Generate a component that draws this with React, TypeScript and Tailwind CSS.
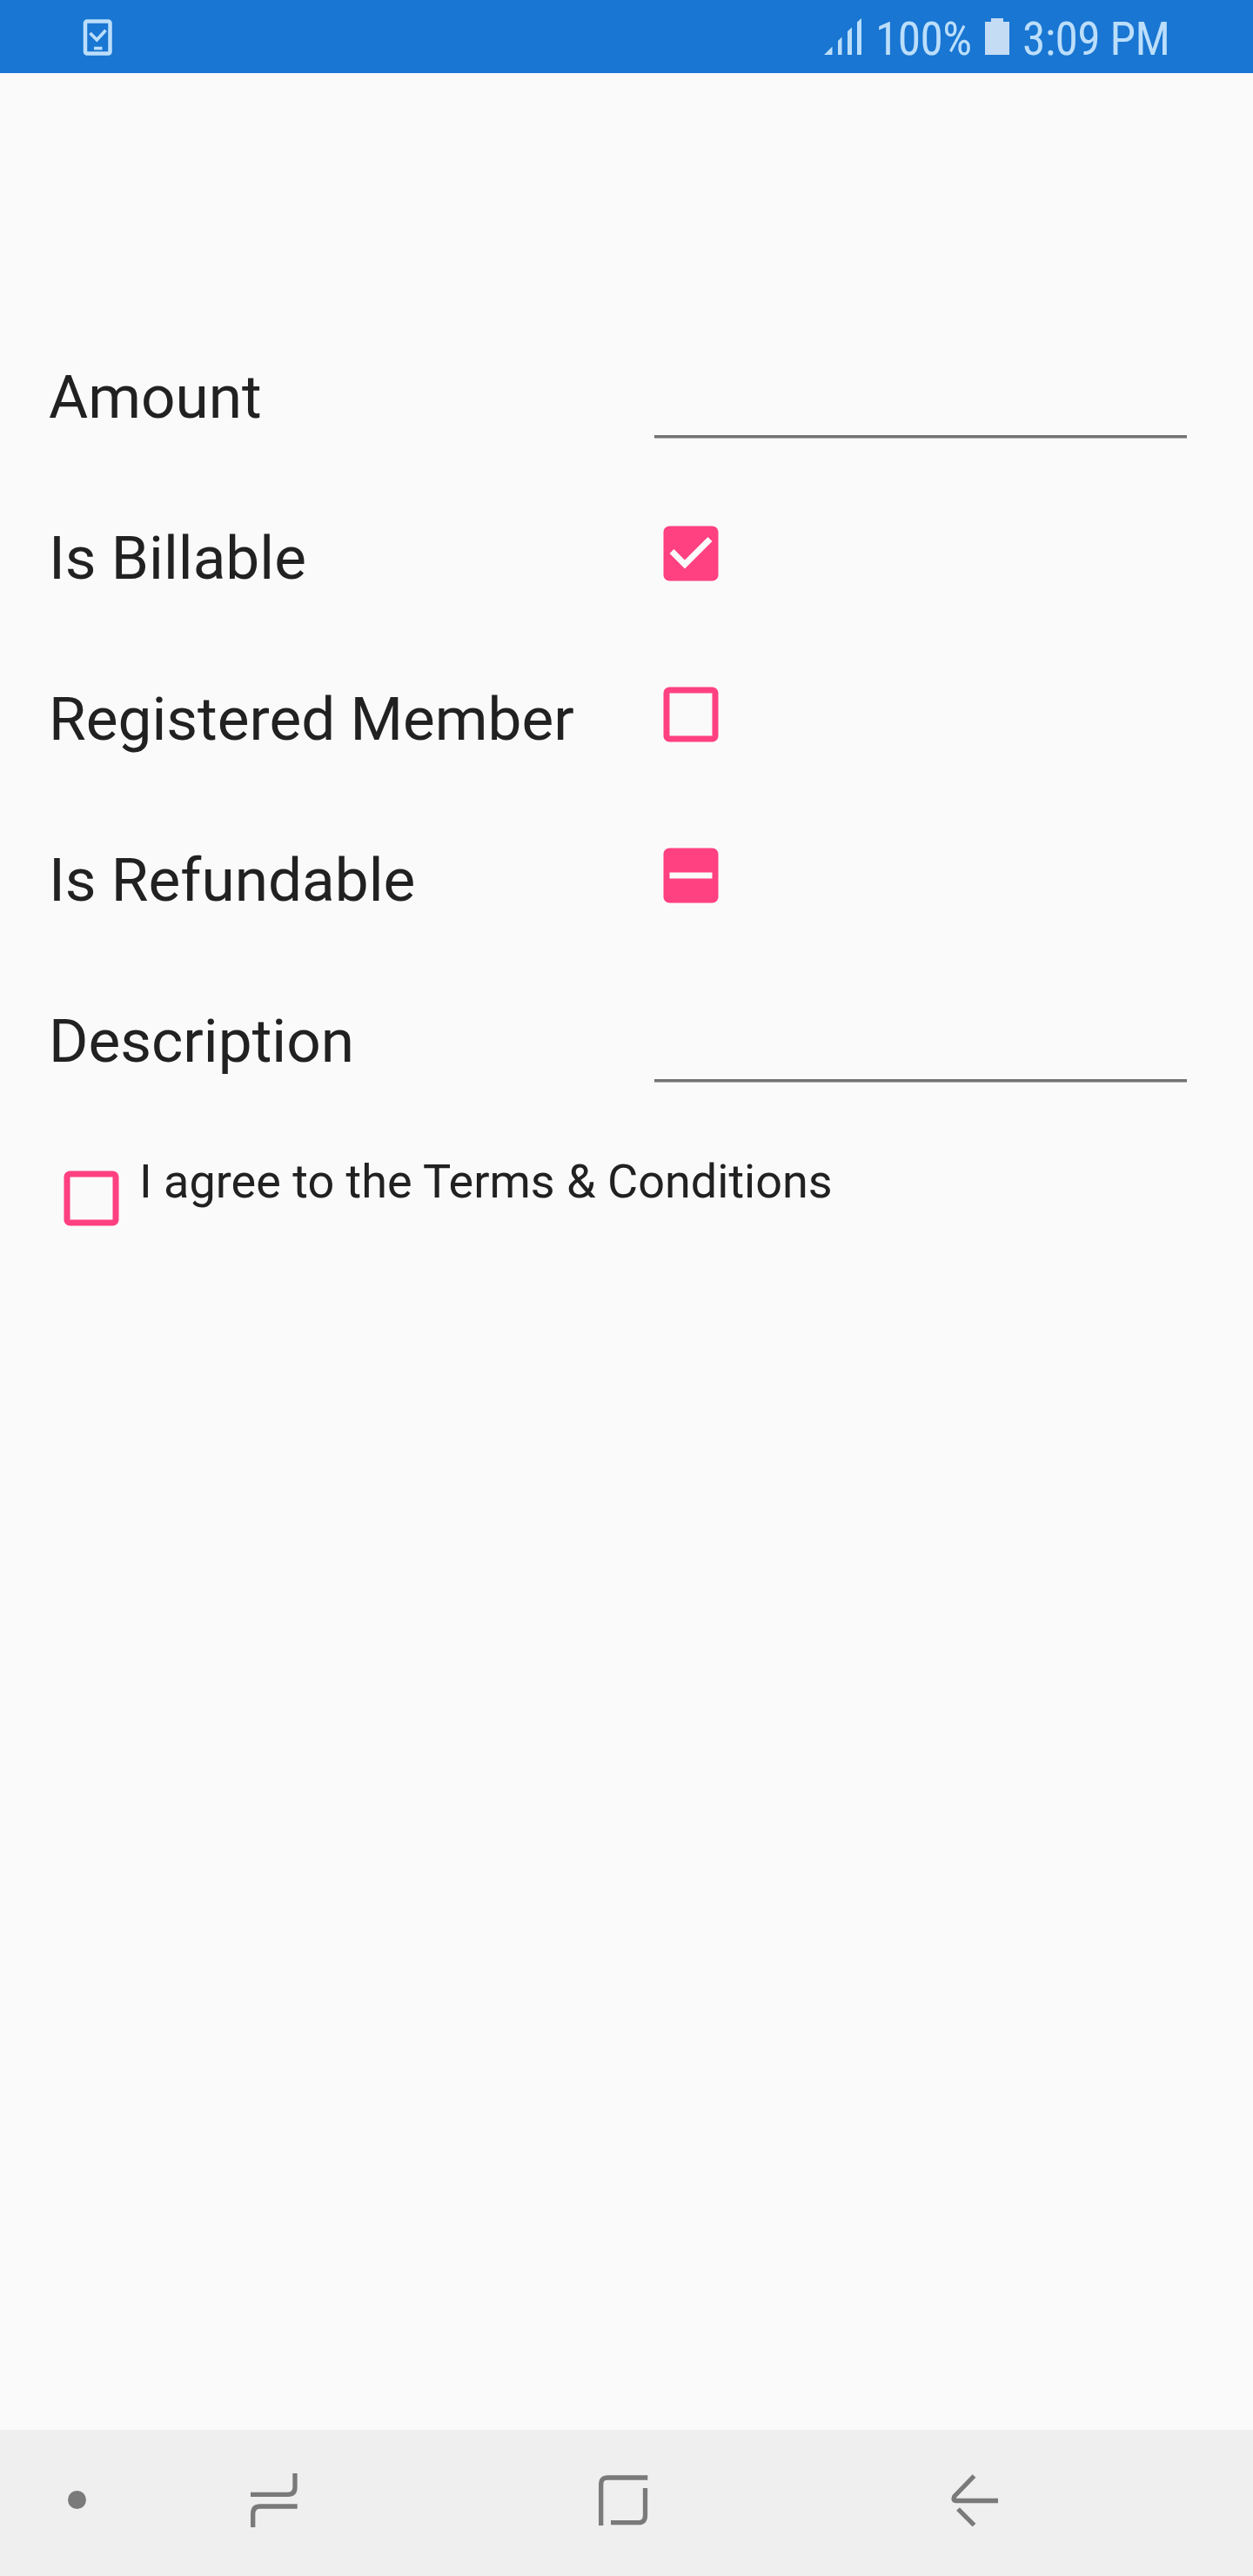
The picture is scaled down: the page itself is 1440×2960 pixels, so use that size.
import type { ReactNode } from "react";

type CheckState = "checked" | "unchecked" | "mixed";

const BOX_PATHS: Record<CheckState, string> = {
  checked:
    "M19 3H5c-1.11 0-2 .9-2 2v14c0 1.1.89 2 2 2h14c1.11 0 2-.9 2-2V5c0-1.1-.89-2-2-2zm-9 14l-5-5 1.41-1.41L10 14.17l7.59-7.59L19 8l-9 9z",
  unchecked:
    "M19 5v14H5V5h14m0-2H5c-1.1 0-2 .9-2 2v14c0 1.1.9 2 2 2h14c1.1 0 2-.9 2-2V5c0-1.1-.9-2-2-2z",
  mixed:
    "M19 3H5c-1.1 0-2 .9-2 2v14c0 1.1.9 2 2 2h14c1.1 0 2-.9 2-2V5c0-1.1-.9-2-2-2zm0 10H5v-2h14v2z",
};

function Checkbox({ state }: { state: CheckState }) {
  return (
    <svg
      role="checkbox"
      aria-checked={state === "mixed" ? "mixed" : state === "checked"}
      viewBox="0 0 24 24"
      className="block size-[84px] shrink-0 fill-[#ff4081]"
    >
      <path d={BOX_PATHS[state]} />
    </svg>
  );
}

function TextField() {
  return (
    <div className="h-[95px] w-[612px] border-b border-[#b4b4b4]">
      <div className="h-[94px] border-b-3 border-[#737373]" />
    </div>
  );
}

function Row({ label, children }: { label: string; children: ReactNode }) {
  return (
    <div className="grid h-[185px] grid-cols-[696px_1fr] items-start">
      <span className="pt-[6px] text-[69.35px] leading-[83px] whitespace-nowrap">{label}</span>
      {children}
    </div>
  );
}

function StatusBar() {
  return (
    <header className="flex h-[84px] items-start bg-[#1976d2] pl-[95px] text-[#bbdefb]">
      <svg viewBox="0 0 34 42" className="mt-[21.5px] h-[42px] w-[34px]" fill="none" stroke="currentColor">
        <rect x="3" y="2.5" width="28.5" height="37" rx="2" strokeWidth="4.5" />
        <path d="M8.500 16l7.800 7.800L26.500 12.700" strokeWidth="3.6" />
        <path d="M13 33.500h9.500" strokeWidth="3.6" />
      </svg>
      <div className="ml-[818px] flex items-start font-['Roboto_Condensed','Roboto',sans-serif]">
        <svg viewBox="0 0 43 42" className="mt-[21px] h-[42px] w-[43px] fill-current">
          <path d="M0 42L9.500 32.500V42zM16 26l4.500-4.500V42H16zM27 15l5-4.500V42h-5zM38 4.500L43 0v42h-5z" />
        </svg>
        <span className="ml-[16px] w-[115px] pt-[13px] text-[53.5px] leading-[63px] tracking-[-0.7px] whitespace-nowrap">
          100%
        </span>
        <svg viewBox="0 0 28 42" className="mt-[20.5px] ml-[11px] h-[42px] w-[28px] fill-[#c5dcf5]">
          <path d="M7 0h14v4h7v38H0V4h7z" />
        </svg>
        <span className="ml-[15px] pt-[13px] text-[53.5px] leading-[63px] tracking-[-0.7px] whitespace-nowrap">
          3:09 PM
        </span>
      </div>
    </header>
  );
}

function NavigationBar() {
  return (
    <nav className="flex h-[168px] items-center bg-[#efefef] pb-[7px] pl-[78px] text-[#7a7a7a]">
      <span className="size-[21px] rounded-full bg-current" />
      <svg viewBox="0 0 54 62" className="ml-[189px] h-[62px] w-[54px]" fill="none" stroke="currentColor" strokeWidth="5.3">
        <path d="M0 24.300H43Q51 24.300 51 16V0M2.700 62V46.500Q2.700 38 11 38H53.700" />
      </svg>
      <svg viewBox="0 0 57 58" className="ml-[346px] h-[58px] w-[57px]" fill="none" stroke="currentColor" strokeWidth="5.3">
        <path d="M2.700 58V11Q2.700 3 10.500 3H56.300M53.500 15V46.500Q53.500 54.700 45.500 54.700H14" />
      </svg>
      <svg viewBox="0 0 55 60" className="ml-[348px] h-[60px] w-[55px]" fill="none" stroke="currentColor" strokeWidth="5.3">
        <path d="M26.500 2L4 25.200Q1.500 30 5.500 30.500H54M8 40L26.500 58.500" />
      </svg>
    </nav>
  );
}

export default function App() {
  return (
    <div className="flex h-[2960px] w-[1440px] flex-col overflow-hidden bg-[#fafafa] font-['Roboto',sans-serif] text-[#212121]">
      <StatusBar />
      <main className="flex-1 pt-[325px] pl-[56px]">
        <Row label="Amount">
          <TextField />
        </Row>
        <Row label="Is Billable">
          <Checkbox state="checked" />
        </Row>
        <Row label="Registered Member">
          <Checkbox state="unchecked" />
        </Row>
        <Row label="Is Refundable">
          <Checkbox state="mixed" />
        </Row>
        <Row label="Description">
          <TextField />
        </Row>
        <div className="flex items-start pl-[7px]">
          <div className="pt-px">
            <Checkbox state="unchecked" />
          </div>
          <span className="-mt-[10px] ml-[13px] text-[54px] leading-[67px] whitespace-nowrap">
            I agree to the Terms &amp; Conditions
          </span>
        </div>
      </main>
      <NavigationBar />
    </div>
  );
}
